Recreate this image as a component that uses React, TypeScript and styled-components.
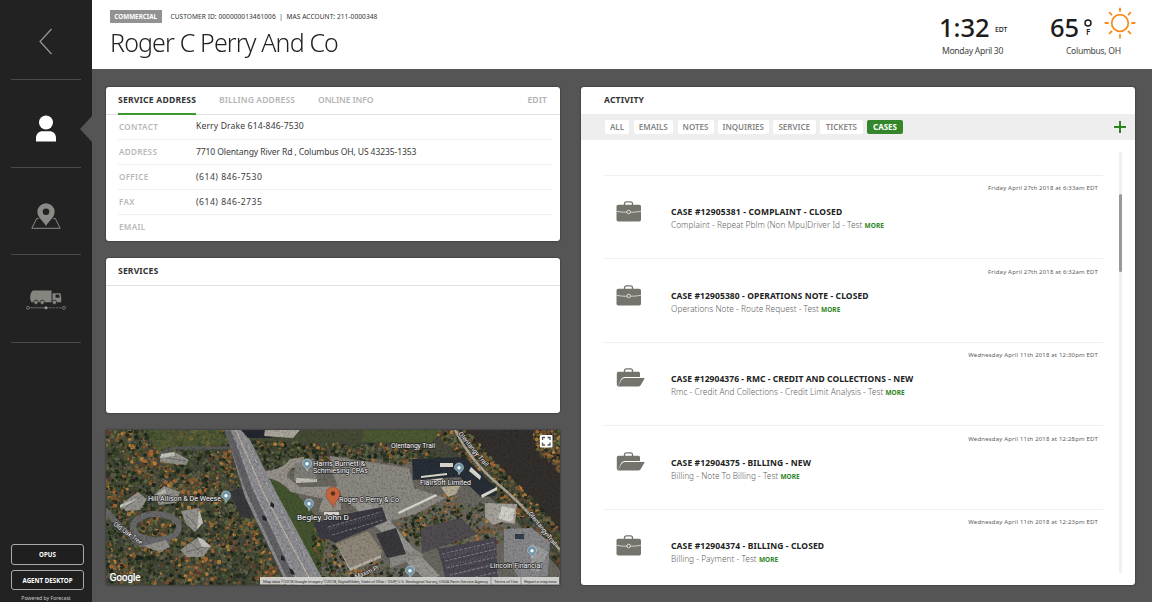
import React from 'react';
import styled, { createGlobalStyle } from 'styled-components';

const GlobalStyle = createGlobalStyle`
  * { box-sizing: border-box; }
  html, body { margin: 0; padding: 0; }
  body { background: #555; font-family: 'Noto Sans', 'Open Sans', sans-serif; color: #222; overflow: hidden; }
`;

const Screen = styled.div`
  display: flex;
  width: 1152px;
  height: 602px;
  overflow: hidden;
  background: #555;
`;

const Sidebar = styled.nav`
  display: flex;
  flex-direction: column;
  align-items: center;
  width: 92px;
  flex: none;
  background: #222;
`;

const NavItem = styled.a<{ $height: number; $drop: number }>`
  position: relative;
  display: flex;
  align-items: center;
  justify-content: center;
  width: 70px;
  height: ${(p) => p.$height}px;
  padding-top: ${(p) => p.$drop}px;
  border-bottom: 1px solid #4d464c;
  svg { display: block; }
`;

const ActiveArrow = styled.span`
  position: absolute;
  right: -11px;
  top: 36px;
  border: solid transparent;
  border-width: 13px 12px 13px 0;
  border-right-color: #555;
`;

const SidebarFooter = styled.div`
  display: flex;
  flex-direction: column;
  align-items: center;
  gap: 5px;
  margin: auto 0 0 3px;
  height: 58px;
`;

const SidebarButton = styled.button`
  width: 73px;
  height: 20.5px;
  flex: none;
  padding: 0;
  border: 1.3px solid #aaa;
  border-radius: 3px;
  background: #1f1f1f;
  color: #fff;
  font: 700 6.2px/19px 'Noto Sans', sans-serif;
`;

const Powered = styled.div`
  margin-right: 3px;
  font-size: 5.1px;
  line-height: 7px;
  color: #ccc;
  white-space: nowrap;
`;

const Main = styled.main`
  display: flex;
  flex-direction: column;
  flex: 1;
  min-width: 0;
`;

const Header = styled.header`
  display: flex;
  justify-content: space-between;
  height: 69px;
  flex: none;
  padding: 0 17px 0 18px;
  background: #fff;
`;

const Customer = styled.div`
  padding-top: 10px;
`;

const MetaLine = styled.div`
  display: flex;
  align-items: center;
  gap: 9px;
  height: 13px;
`;

const Badge = styled.span`
  width: 51.5px;
  height: 13px;
  background: #929292;
  color: #fff;
  font-size: 6.3px;
  font-weight: 700;
  line-height: 13px;
  text-align: center;
`;

const Meta = styled.span`
  font-size: 6.6px;
  letter-spacing: 0.05px;
  color: #333;
  white-space: pre;
`;

const CustomerName = styled.h1`
  margin: 1px 0 0;
  font-size: 26.5px;
  font-weight: 300;
  line-height: 37px;
  letter-spacing: -0.9px;
  color: #222;
  white-space: nowrap;
  transform: scaleX(0.942);
  transform-origin: left;
`;

const Conditions = styled.div`
  display: flex;
  padding-top: 9px;
`;

const Readout = styled.div<{ $width: number }>`
  display: flex;
  flex-direction: column;
  width: ${(p) => p.$width}px;
`;

const ReadoutRow = styled.div`
  display: flex;
  align-items: center;
  height: 36px;
`;

const BigValue = styled.span<{ $width: number }>`
  width: ${(p) => p.$width}px;
  font-size: 25.5px;
  font-weight: 540;
  line-height: 36px;
  color: #1c1c1c;
`;

const Zone = styled.span`
  margin: 5px 0 0 6px;
  font-size: 6.8px;
  font-weight: 500;
`;

const Degree = styled.span`
  display: flex;
  flex-direction: column;
  align-items: center;
  margin: 1px 0 0 5px;
  font-size: 8px;
  font-weight: 600;
  line-height: 8px;
  svg { display: block; margin-bottom: 1.5px; }
`;

const ReadoutCaption = styled.div<{ $indent: number }>`
  margin-left: ${(p) => p.$indent}px;
  margin-top: -0.5px;
  font-size: 8.6px;
  line-height: 12px;
  letter-spacing: -0.32px;
  color: #444;
  white-space: nowrap;
`;

const SunSlot = styled.div`
  margin: -2px 0 0 11.5px;
  align-self: flex-start;
  svg { display: block; }
`;

const Content = styled.div`
  display: flex;
  gap: 21px;
  padding: 18px 17px 17px 14px;
  height: 533px;
`;

const LeftColumn = styled.div`
  display: flex;
  flex-direction: column;
  gap: 17px;
  width: 454px;
  flex: none;
`;

const Card = styled.section<{ $height: number }>`
  height: ${(p) => p.$height}px;
  flex: none;
  border-radius: 3px;
  background: #fff;
  box-shadow: 0 0 2px rgba(0, 0, 0, 0.55);
  overflow: hidden;
`;

const CardHeader = styled.div<{ $line?: boolean }>`
  display: flex;
  align-items: stretch;
  height: 28px;
  padding-left: 12px;
  border-bottom: ${(p) => (p.$line ? '1px solid #e0e0e0' : '0')};
`;

const Tab = styled.span<{ $active?: boolean; $width: number; $ls: number }>`
  width: ${(p) => p.$width}px;
  height: 28px;
  margin-right: 23px;
  font-size: 8.6px;
  font-weight: ${(p) => (p.$active ? 700 : 600)};
  line-height: 26px;
  letter-spacing: ${(p) => p.$ls}px;
  color: ${(p) => (p.$active ? '#333' : '#b5b5b5')};
  border-bottom: ${(p) => (p.$active ? '2px solid #3a9a2c' : '0')};
  white-space: nowrap;
`;

const EditLink = styled.span`
  margin: 0 13px 0 auto;
  font-size: 8.6px;
  font-weight: 600;
  line-height: 26px;
  letter-spacing: 0.1px;
  color: #b0b0b0;
`;

const CardTitle = styled.h2`
  margin: 0;
  font-size: 8.6px;
  font-weight: 700;
  line-height: 26px;
  letter-spacing: 0.15px;
  color: #333;
`;

const Fields = styled.dl`
  margin: 0 8px 0 12px;
`;

const Field = styled.div`
  display: flex;
  align-items: center;
  height: 25px;
  padding-bottom: 0.4px;
  border-bottom: 1px solid #efefef;
  &:first-child { padding-bottom: 2px; }
  &:last-child { padding-bottom: 2px; border-bottom: 0; }
`;

const FieldLabel = styled.dt`
  width: 78px;
  padding-left: 1px;
  font-size: 8.1px;
  font-weight: 600;
  letter-spacing: 0.32px;
  color: #b8b8b8;
`;

const FieldValue = styled.dd<{ $ls: number }>`
  margin: 0;
  font-size: 8.6px;
  letter-spacing: ${(p) => p.$ls}px;
  color: #3a3a3a;
  white-space: nowrap;
`;

const ActivityCard = styled(Card)`
  flex: 1;
`;

const ActivityHeader = styled(CardHeader)`
  height: 27px;
  padding-left: 23px;
`;

const FilterBar = styled.div`
  display: flex;
  align-items: center;
  height: 25.5px;
  padding: 0 9px 0 24px;
  background: #eee;
`;

const Chip = styled.span<{ $width: number; $active?: boolean }>`
  width: ${(p) => p.$width}px;
  height: 14px;
  margin-right: 4.5px;
  border-radius: 2px;
  background: ${(p) => (p.$active ? '#34862a' : '#fff')};
  color: ${(p) => (p.$active ? '#fff' : '#858585')};
  font-size: 8px;
  font-weight: ${(p) => (p.$active ? 700 : 600)};
  line-height: 14px;
  text-align: center;
  white-space: nowrap;
`;

const AddButton = styled.span`
  margin-left: auto;
  svg { display: block; }
`;

const ListArea = styled.div`
  display: flex;
  justify-content: space-between;
  height: 446px;
  padding: 12.5px 13px 12px 22px;
`;

const CaseList = styled.div`
  width: 500px;
  padding-top: 22.5px;
  overflow: hidden;
`;

const CaseRow = styled.article`
  display: grid;
  grid-template-columns: 68px 1fr;
  grid-template-rows: 23px 1fr;
  height: 83.5px;
  border-top: 1px solid #f0f0f0;
`;

const CaseDate = styled.time`
  grid-column: 1 / 3;
  padding: 8.5px 5px 0 0;
  font-size: 6px;
  line-height: 9px;
  letter-spacing: 0.18px;
  text-align: right;
  color: #5c5c5c;
`;

const CaseIcon = styled.div`
  padding: 2.5px 0 0 13px;
  svg { display: block; }
`;

const CaseBody = styled.div`
  padding-top: 6.5px;
  white-space: nowrap;
`;

const CaseTitle = styled.h3<{ $ls: number }>`
  margin: 0;
  font-size: 8.5px;
  font-weight: 700;
  line-height: 13px;
  letter-spacing: ${(p) => p.$ls}px;
  color: #222;
`;

const CaseText = styled.p`
  margin: 0;
  font-size: 8.3px;
  font-weight: 350;
  line-height: 13px;
  letter-spacing: 0.03px;
  color: #626262;
`;

const More = styled.a`
  font-size: 6.5px;
  font-weight: 700;
  color: #2c8423;
`;

const ScrollTrack = styled.div`
  width: 3px;
  height: 421px;
  padding-top: 42px;
  background: #f0f0f0;
`;

const ScrollThumb = styled.div`
  width: 3px;
  height: 78px;
  border-radius: 1.5px;
  background: #999;
`;

const MapCard = styled(Card)`
  border-radius: 0;
  svg { display: block; }
`;

/* ---------- icons ---------- */

const BackIcon = () => (
  <svg width="14" height="27" viewBox="0 0 14 27" fill="none" stroke="#999" strokeWidth="1.2">
    <path d="M12.5 1 1 13.5 12.5 26" />
  </svg>
);

const PersonIcon = () => (
  <svg width="20" height="27" viewBox="0 0 20 27" fill="#fff">
    <circle cx="10" cy="7.5" r="7" />
    <path d="M0 26.5V23c0-4.200 3-6.800 6.500-6.800h7c3.500 0 6.500 2.600 6.500 6.800v3.500Z" />
  </svg>
);

const PlaceIcon = () => (
  <svg width="30" height="26" viewBox="0 0 30 26">
    <path d="M7.500 15.500 5.700 15.500.8 25.300H29.200L24.300 15.500H22.300" fill="none" stroke="#8a8a86" strokeWidth="1" />
    <path d="M15 .2a8.600 8.600 0 0 0-8.600 8.600C6.400 14.500 11.300 17 15 23c3.700-6 8.600-8.500 8.600-14.200A8.600 8.600 0 0 0 15 .2Zm0 5.200a3.300 3.300 0 1 1 0 6.600 3.300 3.300 0 0 1 0-6.600Z" fill="#8a8a86" fillRule="evenodd" />
  </svg>
);

const TruckIcon = () => (
  <svg width="40" height="20" viewBox="0 0 40 20">
    <path d="M7 .5h18.500v11.800H5.500C3.500 9.500 3.500 3 7 .5Z" fill="#858580" />
    <path d="M26.500 3.200H34.500L35.200 8V12.300H26.500Z" fill="#858580" />
    <path d="M29.500 4.500h3.600l.6 3.200h-4.200Z" fill="#222" />
    <g fill="#858580" stroke="#222" strokeWidth=".8">
      <circle cx="10" cy="12.300" r="2.200" />
      <circle cx="16.200" cy="12.300" r="2.200" />
      <circle cx="28.400" cy="12.300" r="2.200" />
    </g>
    <path d="M3.500 17.800H20" stroke="#777" strokeWidth=".8" />
    <path d="M20 17.800H37" stroke="#777" strokeWidth=".8" strokeDasharray="2.500 .8" />
    <circle cx="2" cy="17.800" r="1.500" fill="#222" stroke="#85857f" strokeWidth=".8" />
    <circle cx="38" cy="17.800" r="1.500" fill="#222" stroke="#85857f" strokeWidth=".8" />
    <circle cx="20" cy="17.800" r="1.500" fill="#999" />
  </svg>
);

const SunIcon = () => (
  <svg width="32" height="32" viewBox="-16 -16 32 32" fill="none" stroke="#f98b1b" strokeWidth="1.800" strokeLinecap="round">
    <circle r="8.300" />
    {[0, 45, 90, 135, 180, 225, 270, 315].map((a) => (
      <path key={a} d="M0-12V-14.700" transform={`rotate(${a})`} />
    ))}
  </svg>
);

const BriefcaseIcon = () => (
  <svg width="26" height="21" viewBox="0 0 26 21">
    <path d="M8.500 4V2.800C8.500 1.500 9.300.8 10.500.8h4c1.200 0 2 .7 2 2V4" fill="none" stroke="#74746c" strokeWidth="1.300" />
    <rect x=".5" y="3.800" width="24.500" height="16.700" rx="1.800" fill="#74746c" />
    <path d="M.5 10.200c4 .9 6 1 9.800 1h5c4-.1 6-.2 9.700-1" fill="none" stroke="#ddd" strokeWidth=".9" />
    <circle cx="12.700" cy="11" r="1.800" fill="#74746c" stroke="#ddd" strokeWidth="1" />
  </svg>
);

const OpenCaseIcon = () => (
  <svg width="30" height="21" viewBox="0 0 30 21">
    <path d="M8.500 4V2.800C8.500 1.500 9.300.8 10.500.8h4c1.200 0 2 .7 2 2V4" fill="none" stroke="#74746c" strokeWidth="1.300" />
    <path d="M.8 17.500V5.500Q.8 3.800 2.500 3.800H22.500Q24 3.800 24 5.500V8.900H10C6.500 8.900 5.800 10 5 11.500L2 17.800Z" fill="#74746c" />
    <path d="M1.500 18.600 5.800 11.500Q6.700 9.900 8.500 9.900H28.800L24.800 17Q23.800 18.600 22 18.600Z" fill="#74746c" />
  </svg>
);

/* ---------- aerial map ---------- */

type Pt = [number, number];

const createRandom = (seed: number) => () => {
  seed = (seed * 1664525 + 1013904223) % 4294967296;
  return seed / 4294967296;
};

const contains = (poly: Pt[], x: number, y: number) => {
  let inside = false;
  for (let i = 0, j = poly.length - 1; i < poly.length; j = i++) {
    const [xi, yi] = poly[i];
    const [xj, yj] = poly[j];
    if (yi > y !== yj > y && x < ((xj - xi) * (y - yi)) / (yj - yi) + xi) inside = !inside;
  }
  return inside;
};

const GREENS = ['#1d261b', '#2d3925', '#3b482b', '#4b5633', '#606845', '#272f22', '#434836', '#5e5d4a'];
const AUTUMN = ['#87592f', '#a66935', '#755030', '#6d5d34', '#b5823f', '#5d3f2d'];

interface Grove { area: Pt[]; count: number; autumn: number; size: number; }

const GROVES: Grove[] = [
  { area: [[0, 0], [120, 0], [132, 50], [178, 154], [0, 154]], count: 4200, autumn: 0.26, size: 1.8 },
  { area: [[137, 12], [195, 12], [202, 40], [155, 38]], count: 340, autumn: 0.12, size: 1.6 },
  { area: [[190, 14], [310, 14], [345, 30], [300, 34], [200, 30]], count: 560, autumn: 0.2, size: 1.6 },
  { area: [[332, 4], [346, 20], [402, 80], [454, 136], [454, 100], [418, 60], [378, 22], [360, 0]], count: 620, autumn: 0.4, size: 1.9 },
  { area: [[328, 0], [360, 0], [380, 20], [400, 50], [386, 52], [350, 22]], count: 200, autumn: 0.3, size: 1.6 },
  { area: [[428, 0], [454, 0], [454, 42], [430, 20]], count: 240, autumn: 0.6, size: 1.8 },
  { area: [[306, 76], [350, 60], [362, 108], [330, 120], [300, 110]], count: 260, autumn: 0.2, size: 1.6 },
  { area: [[205, 100], [222, 88], [232, 116], [300, 140], [290, 154], [212, 154]], count: 380, autumn: 0.25, size: 1.6 },
  { area: [[288, 85], [400, 70], [410, 112], [300, 116]], count: 420, autumn: 0.2, size: 1.6 },
];

const rnd = createRandom(41);

const TREES = GROVES.flatMap(({ area, count, autumn, size }) => {
  const xs = area.map((p) => p[0]);
  const ys = area.map((p) => p[1]);
  const [x0, x1, y0, y1] = [Math.min(...xs), Math.max(...xs), Math.min(...ys), Math.max(...ys)];
  const out: { x: number; y: number; r: number; c: string }[] = [];
  while (out.length < count) {
    const x = x0 + rnd() * (x1 - x0);
    const y = y0 + rnd() * (y1 - y0);
    const patch = Math.sin(x / 13 + 1) * Math.cos(y / 11) * 0.28;
    const hue = rnd();
    const pick = rnd();
    const r = 0.5 + rnd() * size;
    if (!contains(area, x, y)) continue;
    const set = hue < autumn + patch ? AUTUMN : GREENS;
    out.push({ x, y, r, c: set[Math.floor(pick * set.length)] });
  }
  return out;
});

const Trees = () => (
  <g>
    {TREES.map((t, i) => (
      <circle key={i} cx={t.x.toFixed(1)} cy={t.y.toFixed(1)} r={t.r.toFixed(1)} fill={t.c} />
    ))}
  </g>
);

const MapPin = ({ x, y }: { x: number; y: number }) => (
  <g transform={`translate(${x} ${y})`}>
    <path d="M0 5.800C-1-.0-4.500 2-4.500-1.500a4.500 4.500 0 0 1 9 0C4.500 2 1 2.500 0 5.800Z" fill="#6f93a6" stroke="#d6e2e8" strokeWidth=".5" />
    <circle cy="-1.300" r="1.700" fill="#fff" />
  </g>
);

const PLACES: { x: number; y: number; text: string; len: number; rot?: number }[] = [
  { x: 42, y: 71, text: 'Hill Allison & De Weese', len: 73 },
  { x: 207, y: 36, text: 'Harris Burnett &', len: 52 },
  { x: 207, y: 43, text: 'Schmiesing CPAs', len: 55 },
  { x: 233, y: 72, text: 'Roger C Perry & Co', len: 60 },
  { x: 191, y: 90, text: 'Begley John D', len: 52 },
  { x: 314, y: 55, text: 'Flairsoft Limited', len: 51 },
  { x: 384, y: 138, text: 'Lincoln Financial', len: 52 },
  { x: 285, y: 18, text: 'Olentangy Trail', len: 44 },
  { x: 352, y: 4, text: 'Olentangy Trail', len: 43, rot: 50 },
  { x: 422, y: 84, text: 'Olentangy Trail', len: 41, rot: 51 },
  { x: 7, y: 95, text: 'Old Oak Tree', len: 34, rot: 36 },
  { x: 250, y: 149, text: 'Maxim Pl', len: 25, rot: -22 },
];

const AerialMap = () => (
  <svg width="454" height="155" viewBox="0 0 454 155">
    <defs>
      <filter id="grain" x="0" y="0" width="100%" height="100%">
        <feTurbulence type="fractalNoise" baseFrequency="0.45" numOctaves="3" seed="4" />
        <feColorMatrix values="0 0 0 0 0  0 0 0 0 0  0 0 0 0 0  2.6 0 0 0 -1.15" />
      </filter>
    </defs>
    <rect width="454" height="155" fill="#46483b" />
    <path d="M190 25 260 28 345 35 405 85 454 140V155H220L170 60Z" fill="#69675f" />
    <path d="M155 48 175 46 222 100 212 154 190 130Z" fill="#44542f" />
    <path d="M135 0H255V12L145 13Z" fill="#464b36" />
    <path d="M352 0H454V102L414 58 365 18Z" fill="#332f2c" />
    <Trees />
    <path d="M40 0H116L122 15 50 19Z" fill="#4f5c35" opacity=".65" />
    <path d="M257 0H334L326 13 256 12Z" fill="#4c5831" />
    {/* residential loop and houses on the left */}
    <g fill="none" stroke="#68686a">
      <ellipse cx="50" cy="97" rx="23" ry="13" strokeWidth="6" />
      <path d="M0 81Q15 98 30 111Q45 119 64 110" strokeWidth="6" />
      <path d="M53 28Q60 16 82 18H125" strokeWidth="3" stroke="#575956" />
    </g>
    <g fill="#92918b">
      <path d="m55 24 14-2 14 8-3 5-11-1-15-2Z" />
      <path d="m14 75 18-13 9 7-7 11-14 1Z" />
      <path d="m48 65 10-9 16 6-4 11-17 2Z" />
      <path d="m75 81 18-3 4 15-8 9-9-8Z" />
      <path d="m74 120 17-12 14 8-8 11-16 0Z" />
      <path d="m37 116 23-6 4 7-10 5Z" />
    </g>
    <g fill="#c3c2bb">
      <path d="m14 75 18-7-2 3-16 7ZM55 24l14-2-1 4-14 2ZM93 80l4 13-6 6 1-9ZM91 107l5 10 9 0-8-8ZM50 65l9-6 1 4Z" />
    </g>
    <g stroke="#5f5e5a" strokeWidth=".7" fill="none">
      <path d="M20 77 34 67M52 70 68 63M60 28 80 31M80 85 91 96M80 122 98 117M84 112l13 12" />
    </g>
    <path d="M124 61 137 58 148 79 144 89 134 86Z" fill="#38373c" />
    <path d="M151 41Q175 42 184 29L198 27 198 36Q181 36 181 47L194 57 240 56 219 69 185 62Q174 49 157 47Z" fill="#959089" />
    {/* divided highway */}
    <path d="M119 0H139L170 62 220 155H181L139 67Z" fill="#8c8c91" />
    <path d="M122 0 143 60 188 155" fill="none" stroke="#626165" strokeWidth="7" />
    <path d="M130 0 158 64 207 155" fill="none" stroke="#c0b6a3" strokeWidth="1.200" />
    <path d="M135 0 166 64 215 155M125 0 150 64 194 155" fill="none" stroke="#b9b9ba" strokeWidth=".6" strokeDasharray="5 3" />
    <g fill="#23242a">
      <path d="m156 85 4 2 1 4-4-1ZM165 72l3 2v4l-4-2ZM175 125l3 2 1 4-4-1ZM183 138l4 2 2 5-4-1Z" />
    </g>
    {/* driveways, lots and buildings */}
    <path d="M188 50 189 34 207 28 211 49 192 53Z" fill="#807e78" />
    <path d="M190 48 211 49V52L190 53Z" fill="#c2c0b7" />
    <path d="M135 0H166V8H142Z" fill="#25272e" />
    <path d="M159 0H194L187 8 158 6Z" fill="#aaa69d" />
    <path d="M224 26 303 38 308 58 340 68 310 84 284 91 236 67 226 42Z" fill="#8b8882" />
    <path d="M236 66 274 78 300 110 334 146 320 150 298 130 282 108Z" fill="#96948f" />
    <path d="M284 128 310 120 318 125 284 138Z" fill="#8b8984" />
    <path d="M220 88 276 77 281 91 228 113 221 106Z" fill="#3a3942" />
    <path d="M207 93 226 88 230 110 214 109Z" fill="#3c3b44" />
    <path d="M230 114 262 101 276 121 274 128 244 140Z" fill="#8e8779" />
    <path d="M270 104 290 98 300 124 281 128Z" fill="#39383d" />
    <path d="M231 115 244 138 275 125V128L244 141Z" fill="#b4b0a6" />
    <path d="M332 119 390 107 392 154H341Z" fill="#4a4650" />
    <path d="M315 98 354 88 372 104 316 123Z" fill="#504c50" />
    <g stroke="#aba8ae" strokeWidth=".6" strokeDasharray="3 1.500" fill="none">
      <path d="M222 97 275 82M226 105 277 90M336 124 389 112M339 131 390 119M341 138 391 127M344 145 390 134M347 152 392 142" />
    </g>
    <g stroke="#898488" strokeWidth="3" strokeDasharray=".5 2" fill="none" opacity=".65">
      <path d="M223 99 275 85M337 127 389 115M340 136 389 124M344 146 389 134" />
    </g>
    <path d="M349 0Q366 33 393 55T454 120" fill="none" stroke="#aaa395" strokeWidth="2.500" />
    <path d="M306 29 359 27 390 58 389 66 375 67 354 47 307 50Z" fill="#282e37" />
    <path d="M335 57 355 55 350 64 342 67Z" fill="#b5aa94" />
    <path d="M379 73 411 74 409 94 396 92 387 95 379 87Z" fill="#a3a199" />
    <path d="m396 76 13 3-3 14-14-5Z" fill="#d0cec4" />
    <path d="M398 99 426 98 444 112 442 146 413 148 404 132 398 132Z" fill="#87878a" />
    <path d="M409 104h9v5h-9Z" fill="#333d4c" />
    <path d="m426 113 16 9-9 20-8-2Z" fill="#9b9b9c" />
    <path d="M214 76 220 62 228 69 235 72 235 80 213 82Z" fill="#949087" />
    <rect width="454" height="155" filter="url(#grain)" opacity=".2" />
    <g fill="#d5d2c9">
      <path d="m315 46 26-3v2l-26 3ZM315 51l22-3v2l-22 3ZM334 33h13v4h-13ZM365 37l10 9-1 4-11-9ZM375 65l16-8v3l-15 8ZM292 82l38-18 1 2-38 18ZM218 82h15v3h-15Z" />
    </g>
    {[[120, 67], [201, 35], [203, 75], [353, 39], [426, 122], [304, 142]].map(([x, y]) => (
      <MapPin key={`${x}-${y}`} x={x} y={y} />
    ))}
    <path d="M227 78C226 72 220 70 220 64a7 7 0 0 1 14 0c0 6-6 8-7 14Z" fill="#c3643a" stroke="#914526" strokeWidth=".6" />
    <circle cx="227" cy="63.500" r="2.200" fill="#5c2e20" />
    <g fontFamily="Roboto, sans-serif" fontSize="6.500" fill="#fff" stroke="#252525" strokeWidth="1.300" paintOrder="stroke" strokeLinejoin="round">
      {PLACES.map((p, i) => (
        <text key={i} textLength={p.len} lengthAdjust="spacingAndGlyphs" transform={`translate(${p.x} ${p.y}) rotate(${p.rot ?? 0})`}>
          {p.text}
        </text>
      ))}
    </g>
    <text x="3.500" y="151" fontFamily="Roboto, sans-serif" fontWeight="500" fontSize="10.500" fill="#fff" stroke="#444" strokeWidth=".8" paintOrder="stroke" textLength="31">Google</text>
    <rect x="154" y="147" width="299" height="7.500" fill="#d7d7d4" opacity=".93" />
    <path d="M385 147v8M415 147v8" stroke="#777" strokeWidth=".7" />
    <g fontFamily="Roboto, sans-serif" fontSize="4.300" fill="#333">
      <text x="157" y="152.500" textLength="225">Map data ©2018 Google Imagery ©2018, DigitalGlobe, State of Ohio / OSIP, U.S. Geological Survey, USDA Farm Service Agency</text>
      <text x="388" y="152.500" textLength="24">Terms of Use</text>
      <text x="418" y="152.500" textLength="33">Report a map error</text>
    </g>
    <rect x="434" y="5" width="12.500" height="12.500" rx="1" fill="#fff" />
    <path d="M436.500 10V7.500H439M441.500 7.500H444V10M444 12.500V15H441.500M439 15H436.500V12.500" fill="none" stroke="#555" strokeWidth="1.300" />
  </svg>
);

/* ---------- data ---------- */

const FIELDS = [
  { label: 'CONTACT', value: 'Kerry Drake 614-846-7530', ls: 0.13 },
  { label: 'ADDRESS', value: '7710 Olentangy River Rd , Columbus OH, US 43235-1353', ls: -0.13 },
  { label: 'OFFICE', value: '(614) 846-7530', ls: 0.5 },
  { label: 'FAX', value: '(614) 846-2735', ls: 0.5 },
  { label: 'EMAIL', value: '', ls: 0 },
];

const FILTERS: { label: string; width: number }[] = [
  { label: 'ALL', width: 24 },
  { label: 'EMAILS', width: 39.5 },
  { label: 'NOTES', width: 36 },
  { label: 'INQUIRIES', width: 50.5 },
  { label: 'SERVICE', width: 42.5 },
  { label: 'TICKETS', width: 42.5 },
  { label: 'CASES', width: 36 },
];

const CASES = [
  { date: 'Friday April 27th 2018 at 6:33am EDT', title: 'CASE #12905381 - COMPLAINT - CLOSED', text: 'Complaint - Repeat Pblm (Non Mpu)Driver Id - Test', open: false, ls: 0.18 },
  { date: 'Friday April 27th 2018 at 6:32am EDT', title: 'CASE #12905380 - OPERATIONS NOTE - CLOSED', text: 'Operations Note - Route Request - Test', open: false, ls: 0.1 },
  { date: 'Wednesday April 11th 2018 at 12:30pm EDT', title: 'CASE #12904376 - RMC - CREDIT AND COLLECTIONS - NEW', text: 'Rmc - Credit And Collections - Credit Limit Analysis - Test', open: true, ls: 0.05 },
  { date: 'Wednesday April 11th 2018 at 12:28pm EDT', title: 'CASE #12904375 - BILLING - NEW', text: 'Billing - Note To Billing - Test', open: true, ls: 0.12 },
  { date: 'Wednesday April 11th 2018 at 12:23pm EDT', title: 'CASE #12904374 - BILLING - CLOSED', text: 'Billing - Payment - Test', open: false, ls: 0.13 },
];

export default function App() {
  return (
    <>
      <GlobalStyle />
      <Screen>
        <Sidebar>
          <NavItem $height={80} $drop={3}><BackIcon /></NavItem>
          <NavItem $height={88} $drop={10}><PersonIcon /><ActiveArrow /></NavItem>
          <NavItem $height={87} $drop={10}><PlaceIcon /></NavItem>
          <NavItem $height={88} $drop={3}><TruckIcon /></NavItem>
          <SidebarFooter>
            <SidebarButton>OPUS</SidebarButton>
            <SidebarButton>AGENT DESKTOP</SidebarButton>
            <Powered>Powered by Forecast</Powered>
          </SidebarFooter>
        </Sidebar>
        <Main>
          <Header>
            <Customer>
              <MetaLine>
                <Badge>COMMERCIAL</Badge>
                <Meta>CUSTOMER ID: 000000013461006  |  MAS ACCOUNT: 211-0000348</Meta>
              </MetaLine>
              <CustomerName>Roger C Perry And Co</CustomerName>
            </Customer>
            <Conditions>
              <Readout $width={111}>
                <ReadoutRow><BigValue $width={50}>1:32</BigValue><Zone>EDT</Zone></ReadoutRow>
                <ReadoutCaption $indent={3}>Monday April 30</ReadoutCaption>
              </Readout>
              <Readout $width={85}>
                <ReadoutRow>
                  <BigValue $width={30}>65</BigValue>
                  <Degree>
                    <svg width="8" height="8" viewBox="0 0 8 8"><circle cx="4" cy="4" r="3" fill="none" stroke="#1c1c1c" strokeWidth="1.500" /></svg>
                    F
                  </Degree>
                  <SunSlot><SunIcon /></SunSlot>
                </ReadoutRow>
                <ReadoutCaption $indent={16}>Columbus, OH</ReadoutCaption>
              </Readout>
            </Conditions>
          </Header>
          <Content>
            <LeftColumn>
              <Card $height={154}>
                <CardHeader $line>
                  <Tab $active $width={78} $ls={0.2}>SERVICE ADDRESS</Tab>
                  <Tab $width={76} $ls={0.08}>BILLING ADDRESS</Tab>
                  <Tab $width={55} $ls={-0.12}>ONLINE INFO</Tab>
                  <EditLink>EDIT</EditLink>
                </CardHeader>
                <Fields>
                  {FIELDS.map((f) => (
                    <Field key={f.label}>
                      <FieldLabel>{f.label}</FieldLabel>
                      <FieldValue $ls={f.ls}>{f.value}</FieldValue>
                    </Field>
                  ))}
                </Fields>
              </Card>
              <Card $height={155}>
                <CardHeader $line><CardTitle>SERVICES</CardTitle></CardHeader>
              </Card>
              <MapCard $height={155}><AerialMap /></MapCard>
            </LeftColumn>
            <ActivityCard $height={498}>
              <ActivityHeader><CardTitle>ACTIVITY</CardTitle></ActivityHeader>
              <FilterBar>
                {FILTERS.map((f) => (
                  <Chip key={f.label} $width={f.width} $active={f.label === 'CASES'}>{f.label}</Chip>
                ))}
                <AddButton>
                  <svg width="12" height="12" viewBox="0 0 12 12" stroke="#2c8423" strokeWidth="2"><path d="M6 0V12M0 6H12" /></svg>
                </AddButton>
              </FilterBar>
              <ListArea>
                <CaseList>
                  {CASES.map((c) => (
                    <CaseRow key={c.title}>
                      <CaseDate>{c.date}</CaseDate>
                      <CaseIcon>{c.open ? <OpenCaseIcon /> : <BriefcaseIcon />}</CaseIcon>
                      <CaseBody>
                        <CaseTitle $ls={c.ls}>{c.title}</CaseTitle>
                        <CaseText>{c.text} <More>MORE</More></CaseText>
                      </CaseBody>
                    </CaseRow>
                  ))}
                </CaseList>
                <ScrollTrack><ScrollThumb /></ScrollTrack>
              </ListArea>
            </ActivityCard>
          </Content>
        </Main>
      </Screen>
    </>
  );
}
